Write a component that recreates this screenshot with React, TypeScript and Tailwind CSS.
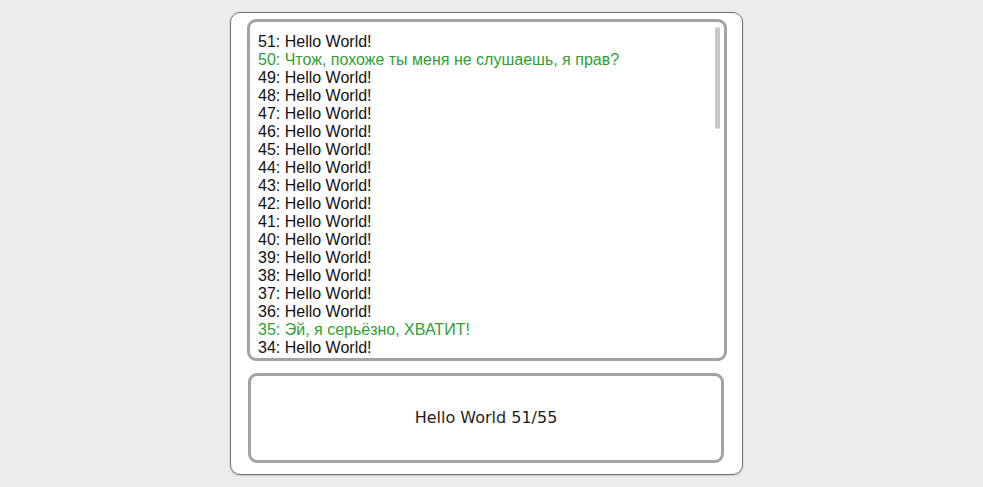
import { FC } from "react";

type Line = { n: number; text: string; green?: boolean };

const lines: Line[] = [];
for (let n = 51; n >= 33; n--) {
  if (n === 50) lines.push({ n, text: "Чтож, похоже ты меня не слушаешь, я прав?", green: true });
  else if (n === 35) lines.push({ n, text: "Эй, я серьёзно, ХВАТИТ!", green: true });
  else lines.push({ n, text: "Hello World!" });
}

const App: FC = () => {
  return (
    <div className="w-full h-[487px] bg-[#ececec] overflow-hidden pt-[12px]">
      <div className="ml-[230px] w-[513px] h-[463px] bg-white border border-[#6f6f6f] rounded-[10px] pl-[16px] pt-[6px] shadow-[0_1px_2px_rgba(0,0,0,0.15)]">
        {/* message log */}
        <div className="relative w-[480px] h-[342px] border-[3px] border-[#a3a3a3] rounded-[9px] overflow-hidden pl-[8px] pt-[11px]">
          <div
            className="text-[16px] leading-[18px] text-[#111]"
            style={{ fontFamily: '"Liberation Sans", Arial, sans-serif' }}
          >
            {lines.map((l) => (
              <div key={l.n} className={l.green ? "text-[#2f9f34]" : ""}>
                {l.n}: {l.text}
              </div>
            ))}
          </div>
          {/* scrollbar thumb */}
          <div className="absolute right-[4px] top-[5px] w-[5px] h-[102px] rounded-[3px] bg-[#c8c8c8]" />
        </div>

        {/* counter */}
        <div
          className="mt-[12px] ml-[1px] w-[476px] h-[90px] border-[3px] border-[#a3a3a3] rounded-[9px] flex items-center justify-center text-[16px] text-[#1e1e1e]"
          style={{ fontFamily: '"DejaVu Sans", Verdana, sans-serif' }}
        >
          Hello World 51/55
        </div>
      </div>
    </div>
  );
};

export default App;
